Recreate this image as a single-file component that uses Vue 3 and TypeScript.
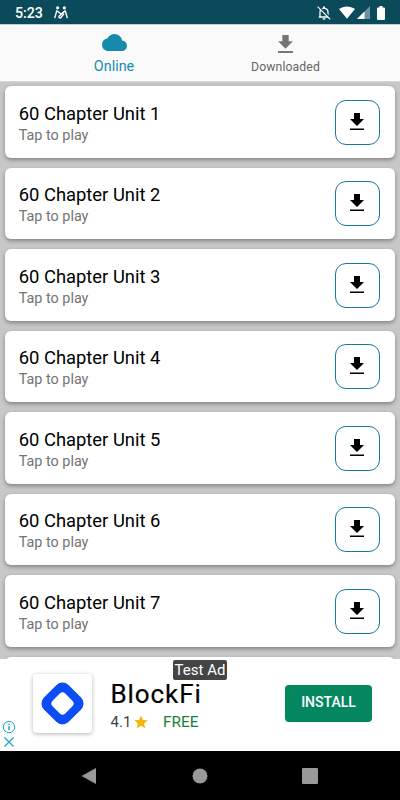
<script setup lang="ts">
interface Unit {
  id: number
  title: string
}

const units: Unit[] = Array.from({ length: 7 }, (_, i) => ({
  id: i + 1,
  title: `60 Chapter Unit ${i + 1}`,
}))
</script>

<template>
  <div class="screen">
    <header class="status">
      <span class="time">5:23</span>
      <svg class="people" viewBox="0 0 14 13">
        <g fill="none" stroke="#fff" stroke-width="1.400" stroke-linecap="round" stroke-linejoin="round">
          <path d="M.8 11.600 2.800 4.800 7 8 11.200 4.800 13.200 11.600" />
          <path d="M10.800 5.200 5 10.200Q4.600 12 6.500 12L9.600 8.200" />
        </g>
        <circle cx="3.600" cy="1.800" r="1.600" fill="#fff" />
        <circle cx="10.400" cy="1.800" r="1.600" fill="#fff" />
      </svg>
      <div class="signals">
        <svg class="bell" viewBox="0 0 14 14">
          <path d="M3 11V6.200C3 3.800 4.700 2.300 7 2.300s4 1.500 4 3.900V11M1.800 11h10.400" fill="none" stroke="#fff" stroke-width="1.300" />
          <path d="M6 .5h2v2H6zM5.500 12.200h3a1.500 1.500 0 0 1-3 0z" fill="#fff" />
          <path d="M1.800.2 14 12.500" stroke="#0b4a5a" stroke-width="1.400" />
          <path d="M.6.700 13.200 13.400" stroke="#fff" stroke-width="1.200" />
        </svg>
        <svg class="wifi" viewBox="0 0 16 13">
          <path d="M0 3C4.600-.5 11.400-.5 16 3L8 12.700z" fill="#fff" />
        </svg>
        <svg class="cell" viewBox="0 0 13 13">
          <path d="M13 0v13H0z" fill="#6b929d" />
          <path d="M7.500 5.500V13H0z" fill="#fff" />
        </svg>
        <svg class="battery" viewBox="0 0 8 14">
          <path d="M2.500 0h3v1.500H7a1 1 0 0 1 1 1V13a1 1 0 0 1-1 1H1a1 1 0 0 1-1-1V2.500a1 1 0 0 1 1-1h1.500z" fill="#fff" />
        </svg>
      </div>
    </header>

    <nav class="tabs">
      <div class="tab online">
        <svg class="cloud" viewBox="0 4 24 16" preserveAspectRatio="none">
          <path d="M19.350 10.040A7.490 7.490 0 0 0 12 4C9.110 4 6.600 5.640 5.350 8.040A5.994 5.994 0 0 0 0 14c0 3.310 2.690 6 6 6h13c2.760 0 5-2.240 5-5 0-2.640-2.050-4.780-4.650-4.960z" fill="#168bad" />
        </svg>
        <span>Online</span>
      </div>
      <div class="tab downloaded">
        <svg class="tab-arrow" viewBox="0 0 14 17">
          <path d="M4 0h6v6h4l-7 7-7-7h4zM0 15h14v2H0z" fill="#757575" />
        </svg>
        <span>Downloaded</span>
      </div>
    </nav>

    <main class="list">
      <article v-for="unit in units" :key="unit.id" class="card">
        <div class="copy">
          <h2>{{ unit.title }}</h2>
          <p>Tap to play</p>
        </div>
        <button class="download">
          <svg viewBox="0 0 14 17">
            <path d="M4 0h6v6h4l-7 7-7-7h4zM0 15.500h14V17H0z" fill="#000" />
          </svg>
        </button>
      </article>
      <div class="card"></div>
    </main>

    <aside class="ad">
      <div class="choices">
        <svg viewBox="0 0 14 14">
          <circle cx="7" cy="7" r="5.700" fill="none" stroke="#17a5c9" stroke-width="1" />
          <path d="M7 6v4.200M7 3.600v1.300" stroke="#17a5c9" stroke-width="1.400" />
        </svg>
        <svg viewBox="0 0 14 14">
          <path d="M2.500 2.500l9 9m0-9l-9 9" stroke="#17a5c9" stroke-width="1.200" />
        </svg>
      </div>
      <div class="logo">
        <svg viewBox="0 0 42 42">
          <rect x="5.500" y="5.500" width="31" height="31" rx="7.500" transform="rotate(45 21 21)" fill="#0b4cf5" />
          <rect x="13" y="13" width="16" height="16" rx="3.500" transform="rotate(45 21 21)" fill="#fff" />
        </svg>
      </div>
      <div class="app-info">
        <strong>BlockFi</strong>
        <div class="rating">
          <span>4.1</span>
          <svg viewBox="0 0 14 14">
            <path d="M7 .5l1.900 4.400 4.800.4-3.600 3.200 1.100 4.700L7 10.700l-4.200 2.500 1.100-4.700L.3 5.300l4.800-.4z" fill="#f7b50c" />
          </svg>
          <span class="free">FREE</span>
        </div>
      </div>
      <button class="install">INSTALL</button>
      <span class="test-label">Test Ad</span>
    </aside>

    <footer class="system-nav">
      <svg viewBox="0 0 16 16"><path d="M.6 8 15 0v16z" fill="#999" /></svg>
      <svg viewBox="0 0 16 16"><circle cx="8" cy="8" r="7.500" fill="#999" /></svg>
      <svg viewBox="0 0 16 16"><rect width="16" height="16" rx="1" fill="#999" /></svg>
    </footer>
  </div>
</template>

<style>
body {
  margin: 0;
  overflow: hidden;
}
</style>

<style scoped>
.screen {
  width: 400px;
  height: 800px;
  display: flex;
  flex-direction: column;
  overflow: hidden;
  background: #c8c8c8;
  font-family: Roboto, sans-serif;
}
svg {
  display: block;
  flex: none;
}
button {
  font-family: inherit;
  margin: 0;
  padding: 0;
}
.status {
  height: 24px;
  flex: none;
  box-sizing: border-box;
  display: flex;
  align-items: center;
  padding: 1px 15px 0 15px;
  background: #0b4a5a;
  color: #fff;
}
.time {
  width: 39px;
  font-size: 14.200px;
  font-weight: 500;
  line-height: 20px;
}
.people {
  width: 14px;
  height: 13px;
}
.signals {
  margin-left: auto;
  display: flex;
  align-items: center;
}
.bell {
  width: 14px;
  height: 14px;
  margin-right: 8px;
}
.wifi {
  width: 16px;
  height: 13px;
  margin-right: 2px;
}
.cell {
  width: 13px;
  height: 13px;
  margin-right: 7px;
}
.battery {
  width: 8px;
  height: 14px;
}
.tabs {
  height: 57px;
  flex: none;
  box-sizing: border-box;
  display: grid;
  grid-template-columns: 172px 171px;
  justify-content: center;
  padding-right: 1px;
  background: #fafafa;
  border-top: 1px solid #c4cccf;
}
.tab {
  display: flex;
  flex-direction: column;
  align-items: center;
}
.online {
  padding-top: 9px;
  color: #168bad;
  font-size: 14.400px;
  line-height: 18px;
}
.cloud {
  width: 25px;
  height: 17px;
  margin-bottom: 7px;
}
.downloaded {
  padding-top: 10px;
  color: #666;
  font-size: 12.200px;
  letter-spacing: 0.120px;
  line-height: 16px;
}
.tab-arrow {
  width: 15px;
  height: 18px;
  margin-bottom: 6px;
}
.list {
  height: 578px;
  flex: none;
  box-sizing: border-box;
  overflow: hidden;
  padding: 4.400px 5px 0;
  display: flex;
  flex-direction: column;
  gap: 10px;
  border-top: 1px solid #d8d8d8;
}
.card {
  height: 71.500px;
  flex: none;
  box-sizing: border-box;
  display: flex;
  align-items: center;
  justify-content: space-between;
  padding: 0 15.500px 0 13.700px;
  border-radius: 6px;
  background: #fff;
  box-shadow: 0 2px 4px rgba(0, 0, 0, 0.350);
}
.copy {
  padding-top: 3px;
}
.copy h2 {
  margin: 0;
  font-size: 18.400px;
  font-weight: 400;
  line-height: 24px;
  color: #000;
}
.copy p {
  margin: 0;
  font-size: 14.400px;
  line-height: 20px;
  color: #737373;
}
.download {
  width: 44.500px;
  height: 45px;
  box-sizing: border-box;
  display: grid;
  place-items: center;
  padding-bottom: 2px;
  border: 1px solid #1678a0;
  border-radius: 11px;
  background: #fff;
}
.download svg {
  width: 14px;
  height: 17px;
}
.ad {
  position: relative;
  height: 92px;
  flex: none;
  box-sizing: border-box;
  display: flex;
  background: #fff;
}
.choices {
  width: 14px;
  margin: 61px 0 0 2px;
}
.choices svg {
  width: 14px;
  height: 14px;
  margin-bottom: 1px;
}
.logo {
  width: 59px;
  height: 59px;
  box-sizing: border-box;
  margin: 15px 0 0 17px;
  display: grid;
  place-items: center;
  border-radius: 4px;
  background: #fff;
  box-shadow: 0 1px 4px rgba(0, 0, 0, 0.300);
}
.logo svg {
  width: 47px;
  height: 47px;
}
.app-info {
  margin: 20px 0 0 18.500px;
}
.app-info strong {
  display: block;
  font-size: 26px;
  font-weight: 400;
  line-height: 30px;
  letter-spacing: 0.900px;
  color: #000;
  -webkit-text-stroke: 0.200px #000;
}
.rating {
  display: flex;
  align-items: center;
  margin-top: 3px;
  font-size: 15px;
  line-height: 20px;
  color: #3c4043;
}
.rating > span:first-child {
  width: 20px;
}
.rating svg {
  width: 14px;
  height: 14px;
  margin: 0 15.500px 0 3px;
}
.rating .free {
  color: #168038;
  font-size: 15.400px;
}
.install {
  width: 87px;
  height: 37px;
  margin: 25.500px 28px 0 auto;
  padding-bottom: 2px;
  border: 0;
  border-radius: 4px;
  background: #04875f;
  color: #fff;
  font-size: 14px;
  font-weight: 500;
}
.test-label {
  position: absolute;
  top: 1px;
  left: 173px;
  width: 54px;
  height: 20px;
  border-radius: 2px;
  background: #444;
  color: #fff;
  font-size: 15px;
  line-height: 21px;
  text-align: center;
  white-space: nowrap;
}
.system-nav {
  height: 49px;
  flex: none;
  display: flex;
  align-items: center;
  justify-content: space-between;
  box-sizing: border-box;
  padding: 0 82px 0 81px;
  background: #000;
}
.system-nav svg {
  width: 16px;
  height: 16px;
}
</style>
